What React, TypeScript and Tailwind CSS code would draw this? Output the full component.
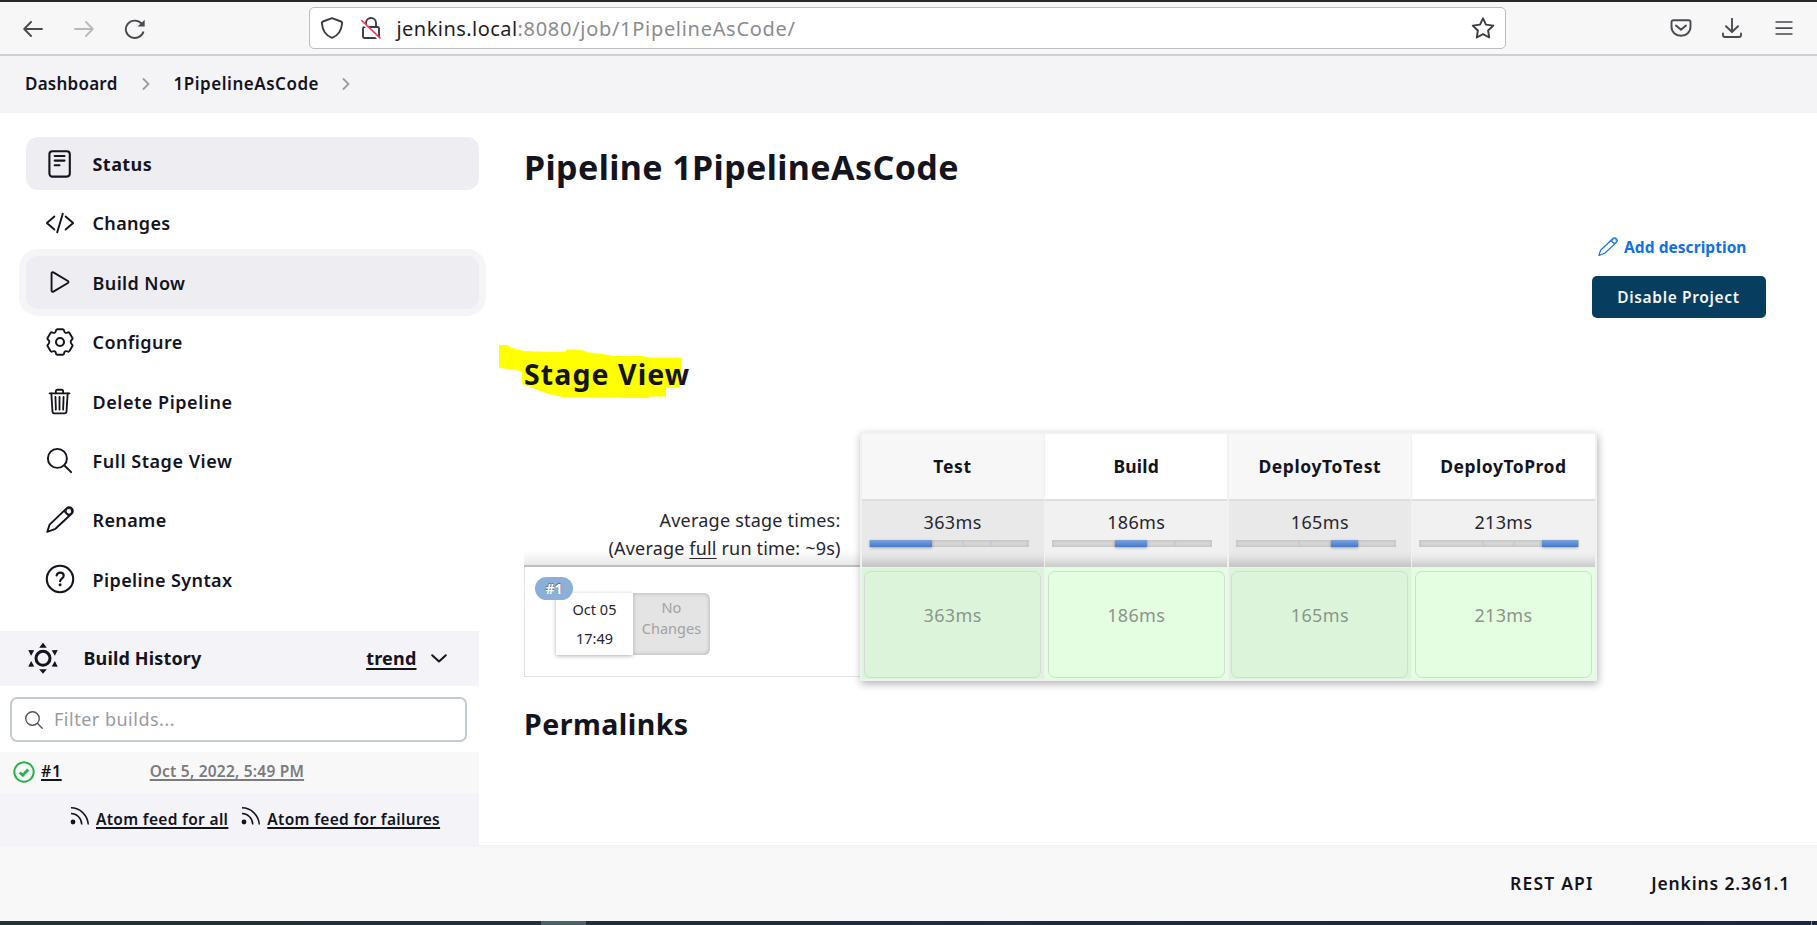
import type { ReactNode } from 'react';
import {
  IoCodeSlashOutline,
  IoPlayOutline,
  IoSearchOutline,
  IoTrashOutline,
} from 'react-icons/io5';

function ChevronRight({ className }: { className: string }) {
  return (
    <svg viewBox="0 0 8 14" className={className} fill="none" stroke="#9b9ba3" strokeWidth="1.8">
      <path d="M1 1.5 6.5 7 1 12.5" />
    </svg>
  );
}

function PencilIcon({ className, width }: { className: string; width: number }) {
  return (
    <svg viewBox="0 0 28 28" className={className} fill="none" stroke="currentColor" strokeWidth={width} strokeLinejoin="round">
      <path d="M1.3 25.8 3.6 18.6 20.6 2.4a3.6 3.6 0 0 1 5.2 5.1L9.4 22.8z" />
      <path d="m18 4.9 5.3 5.1" />
      <circle cx="22.8" cy="5.4" r="2.9" strokeWidth={width * 0.6} />
    </svg>
  );
}

function StatusIcon() {
  return (
    <svg viewBox="0 0 24 28" className="h-[28px] w-[24px]" fill="none" stroke="currentColor" strokeWidth="2.1" strokeLinecap="round">
      <rect x="1.4" y="1.2" width="20.4" height="25.4" rx="3" />
      <path d="M6.7 6h9.8M6.7 10.6h9.8M6.7 15.3h4.8" />
    </svg>
  );
}

function GearIcon() {
  return (
    <svg viewBox="0 0 28 28" className="h-[28px] w-[28px]" fill="none" stroke="currentColor" strokeWidth="1.9" strokeLinejoin="round">
      <path d="M11.3 1.2H16.700Q18 1.300 18.100 2.700 18.200 4 19.200 4.600 20.300 5.200 21.500 4.500 22.700 3.900 23.500 5L26.300 9.800Q27 11 25.800 11.800 24.700 12.700 24.700 14 24.700 15.300 25.800 16.200 27 17 26.300 18.200L23.500 23Q22.700 24.100 21.500 23.500 20.300 22.800 19.200 23.400 18.200 24 18.100 25.300 18 26.700 16.700 26.800H11.300Q10 26.700 9.900 25.300 9.800 24 8.800 23.400 7.700 22.800 6.500 23.500 5.300 24.100 4.500 23L1.700 18.200Q1 17 2.200 16.200 3.300 15.300 3.300 14 3.300 12.700 2.200 11.800 1 11 1.700 9.800L4.500 5Q5.300 3.900 6.500 4.500 7.700 5.200 8.800 4.600 9.800 4 9.900 2.700 10 1.300 11.300 1.200Z" />
      <circle cx="14" cy="14" r="4" strokeWidth="2.1" />
    </svg>
  );
}

function HelpIcon() {
  return (
    <svg viewBox="0 0 30 30" className="h-[30px] w-[30px]" fill="none" stroke="currentColor" strokeWidth="2.1" strokeLinecap="round" strokeLinejoin="round">
      <circle cx="15" cy="15" r="13.2" />
      <path d="M11.600 11.500c.5-2.200 2-2.900 3.600-2.900 2 0 3.500 1.200 3.500 3.100 0 2.900-3.600 2.900-3.600 5.600" />
      <circle cx="15.100" cy="20.800" r="1.500" fill="currentColor" stroke="none" />
    </svg>
  );
}

function RssIcon() {
  return (
    <svg viewBox="0 0 20 20" className="h-[20px] w-[20px]" fill="none" stroke="#14141f" strokeWidth="1.5">
      <circle cx="3" cy="16" r="2.4" fill="#14141f" stroke="none" />
      <path d="M1 7.5c5.500 0 10.500 4.500 10.800 11M1 1.800C10 1.800 17.500 9 18.300 18.500" />
    </svg>
  );
}

function SunIcon() {
  return (
    <svg viewBox="0 0 32 32" className="h-[32px] w-[32px]" fill="#14141f">
      <circle cx="16" cy="16.300" r="7" fill="none" stroke="#14141f" strokeWidth="3" />
      <path d="M16 .8l3.800 5h-7.600zM16 31.700l3.800-4.500h-7.600zM1.300 8l6 .3-3.200 5.400zM30.700 8l-6 .3 3.200 5.400zM1.300 24.800l6-.3-3.200-5.400zM30.700 24.800l-6-.3 3.200-5.400z" />
    </svg>
  );
}

function BrowserBar() {
  return (
    <div className="flex h-[56px] items-center border-t-2 border-b-2 border-t-[#2a262b] border-b-[#cfcfcf] bg-[#f7f7f7] text-[#4a4a50]">
      <svg viewBox="0 0 20 16" className="mt-[2px] ml-[22.500px] h-[16px] w-[20px]" fill="none" stroke="currentColor" strokeWidth="1.900" strokeLinecap="round" strokeLinejoin="round">
        <path d="M19 8H1.200M8 1 1.200 8 8 15" />
      </svg>
      <svg viewBox="0 0 20 16" className="mt-[2px] ml-[31px] h-[16px] w-[20px] text-[#b9b9bb]" fill="none" stroke="currentColor" strokeWidth="1.800" strokeLinecap="round" strokeLinejoin="round">
        <path d="M1 8h17.800M12 1l6.800 7-6.800 7" />
      </svg>
      <svg viewBox="0 0 22 20" className="mt-[2px] ml-[30px] h-[20px] w-[22px]" fill="none" stroke="currentColor" strokeWidth="1.900">
        <path d="M19.500 12.500A9 8.700 0 1 1 17.500 4.500" />
        <path d="M20.700.8v6.700h-7z" fill="currentColor" stroke="none" />
      </svg>
      <div className="ml-[163px] flex h-[42px] w-[1197px] items-center rounded-[5px] border border-[#bdbdbd] bg-white">
        <svg viewBox="0 0 22 22" className="ml-[11px] h-[22px] w-[22px]" fill="none" stroke="#3c3c42" strokeWidth="1.900" strokeLinejoin="round">
          <path d="M11 1.200 20 4.500c.8.300 1.200.8 1.100 1.700C20.600 13 17.500 18.500 11 20.800 4.500 18.500 1.400 13 .9 6.200.8 5.300 1.200 4.800 2 4.500z" />
        </svg>
        <svg viewBox="0 0 20 22" className="ml-[18px] h-[22px] w-[20px]" fill="none" stroke="#3c3c42" strokeWidth="1.900">
          <rect x="2" y="10" width="16" height="11" rx="1.500" />
          <path d="M5 10V6a5 5 0 0 1 10 0v4" />
          <path d="M.3 4.800 18.500 22.500" stroke="#fff" strokeWidth="2.600" />
          <path d="M.3 3.200 19.500 21.500" stroke="#ff3b5f" strokeWidth="1.700" />
        </svg>
        <div className="mt-[1px] ml-[16px] flex text-[20px] leading-[28px]">
          <span className="tracking-[0.450px] text-[#1f1e26]">jenkins.local</span>
          <span className="tracking-[0.700px] text-[#8b8b90]">:8080/job/1PipelineAsCode/</span>
        </div>
        <svg viewBox="0 0 24 22" className="mr-[9.500px] ml-auto h-[22px] w-[24px]" fill="none" stroke="#3c3c42" strokeWidth="1.900" strokeLinejoin="round">
          <path d="M12 1.300 15 7.600l7.300 1-5.200 4.900 1.100 7L12 17.200 5.800 20.500l1.100-7L1.700 8.600l7.300-1z" />
        </svg>
      </div>
      <svg viewBox="0 0 22 18" className="ml-[164px] h-[18px] w-[22px]" fill="none" stroke="currentColor" strokeWidth="1.900" strokeLinecap="round" strokeLinejoin="round">
        <path d="M3.500 1.200h15a2 2 0 0 1 2 2v4.300c0 5.500-4 9.300-9.500 9.300S1.500 13 1.500 7.500V3.200a2 2 0 0 1 2-2z" />
        <path d="m6 6.500 5 4.300 5-4.300" />
      </svg>
      <svg viewBox="0 0 20 20" className="ml-[30px] h-[20px] w-[20px]" fill="none" stroke="currentColor" strokeWidth="1.900" strokeLinecap="round" strokeLinejoin="round">
        <path d="M10 .8v13M4 8.200l6 5.800 6-5.800M1 15.500v1.500c0 1.200.8 2 2 2h14c1.200 0 2-.8 2-2v-1.500" />
      </svg>
      <svg viewBox="0 0 18 14" className="ml-[33px] h-[14px] w-[18px]" fill="none" stroke="currentColor" strokeWidth="1.700">
        <path d="M.5 1H17.500M.5 7.200H17.500M.5 13H17.500" />
      </svg>
    </div>
  );
}

function Task({ icon, children, className = '', text }: { icon: ReactNode; children: ReactNode; className?: string; text: string }) {
  return (
    <a className={`flex h-[53px] items-center rounded-[12px] ${className}`}>
      <span className="ml-[18px] flex w-[32px] justify-center">{icon}</span>
      <span className={`ml-[17px] pt-[1px] text-[18px] leading-[28px] ${text}`}>{children}</span>
    </a>
  );
}

function Sidebar() {
  return (
    <aside className="flex w-[479px] flex-col">
      <nav className="mt-[24.500px] ml-[25.500px] flex h-[494px] flex-col gap-[6.400px] text-[#14141f]">
        <Task icon={<StatusIcon />} className="bg-[#eeedf2]" text="font-bold tracking-[0.450px]">Status</Task>
        <Task icon={<IoCodeSlashOutline className="size-[30px]" />} text="font-semibold tracking-[0.330px]">Changes</Task>
        <Task icon={<IoPlayOutline className="size-[30px]" />} className="bg-[#eeedf2] ring-[7px] ring-[#f5f5f8]" text="font-semibold tracking-[0.390px]">Build Now</Task>
        <Task icon={<GearIcon />} text="font-semibold tracking-[0.400px]">Configure</Task>
        <Task icon={<IoTrashOutline className="size-[29px]" />} text="font-semibold tracking-[0.530px]">Delete Pipeline</Task>
        <Task icon={<IoSearchOutline className="size-[31px]" />} text="font-semibold tracking-[0.540px]">Full Stage View</Task>
        <Task icon={<PencilIcon className="size-[28px]" width={1.9} />} text="font-semibold tracking-[0.350px]">Rename</Task>
        <Task icon={<HelpIcon />} text="font-semibold tracking-[0.400px]">Pipeline Syntax</Task>
      </nav>
      <div className="flex h-[55px] items-center bg-[#f3f3f8] pb-[2px] text-[18px] leading-[28px] text-[#14141f]">
        <span className="ml-[27px]"><SunIcon /></span>
        <span className="ml-[24.500px] font-bold tracking-[0.150px]">Build History</span>
        <span className="mr-[14.500px] ml-auto font-bold tracking-[0.200px] underline decoration-[2px] underline-offset-[3px]">trend</span>
        <svg viewBox="0 0 16 9" className="mt-[2px] mr-[32px] h-[9px] w-[16px]" fill="none" stroke="#14141f" strokeWidth="2" strokeLinecap="round" strokeLinejoin="round">
          <path d="m1.200 1.200 6.800 6.300 6.800-6.300" />
        </svg>
      </div>
      <div className="mt-[11px] ml-[10px] flex h-[45px] w-[457px] items-center rounded-[7px] border-2 border-[#c3ccd1] bg-white">
        <IoSearchOutline className="ml-[11px] size-[22px] text-[#4d545d]" />
        <span className="-mt-[2px] ml-[9px] text-[18px] leading-[28px] tracking-[0.500px] text-[#9a9aa4]">Filter builds...</span>
      </div>
      <div className="mt-[10px] flex h-[41px] items-center bg-[#f8f8f8] text-[15.500px] leading-[24px] font-semibold">
        <svg viewBox="0 0 22 22" className="-mt-[1px] ml-[13px] h-[22px] w-[22px]" fill="none" stroke="#2bb14c">
          <circle cx="11" cy="11" r="9.700" strokeWidth="2" />
          <path d="m6.800 11.500 3 2.700 5.400-5.700" strokeWidth="2.800" />
        </svg>
        <span className="-mt-[4px] ml-[6px] text-[16px] tracking-[0.600px] text-[#14141f] underline decoration-[1.500px] underline-offset-[2px]">#1</span>
        <span className="-mt-[4px] ml-[88px] tracking-[0.210px] text-[#7b7b80] underline decoration-[1.500px] underline-offset-[2px]">Oct 5, 2022, 5:49 PM</span>
      </div>
      <div className="flex h-[52px] items-center bg-[#f3f3f8] text-[15.500px] leading-[24px] font-semibold text-[#14141f]">
        <span className="-mt-[7px] ml-[70px]"><RssIcon /></span>
        <span className="ml-[6px] tracking-[0.330px] underline decoration-[1.500px] underline-offset-[2px]">Atom feed for all</span>
        <span className="-mt-[7px] ml-[13px]"><RssIcon /></span>
        <span className="ml-[6px] tracking-[0.330px] underline decoration-[1.500px] underline-offset-[2px]">Atom feed for failures</span>
      </div>
    </aside>
  );
}

const segments = [63, 32, 28, 37];

const stages = [
  { name: 'Test', time: '363ms', label: 'tracking-[0.700px]', head: 'bg-[#f7f7f7]', mid: 'bg-[#e9e9e9]', cell: 'bg-[#dcf5da]' },
  { name: 'Build', time: '186ms', label: 'tracking-[0.200px]', head: 'bg-white', mid: 'bg-[#f1f1f1]', cell: 'bg-[#e3fee0]' },
  { name: 'DeployToTest', time: '165ms', label: 'tracking-[0.600px]', head: 'bg-[#f7f7f7]', mid: 'bg-[#e9e9e9]', cell: 'bg-[#dcf5da]' },
  { name: 'DeployToProd', time: '213ms', label: 'tracking-[0.500px]', head: 'bg-white', mid: 'bg-[#f1f1f1]', cell: 'bg-[#e3fee0]' },
];

function StageTable() {
  return (
    <div className="ml-[45px] flex h-[249px] w-[1073px]">
      <div className="flex w-[335.500px] flex-col">
        <div className="mt-[66px] flex h-[69px] flex-col items-end border-b-2 border-[#bdbdbd] bg-linear-to-t from-[#e9e9e9] from-0% via-white via-22% to-white pt-[9px] pr-[19px] text-[18px] leading-[27.500px] text-[#26262f]">
          <span className="tracking-[0.220px]">Average stage times:</span>
          <span className="tracking-[0.170px]">
            (Average <span className="underline underline-offset-[3px]">full</span> run time: ~9s)
          </span>
        </div>
        <div className="h-[110px] border-b border-l border-[#e2e2e2] bg-white">
          <div className="relative mt-[26px] ml-[31px] flex h-[62px] w-[154px] text-[14.500px]">
            <div className="flex w-[77px] flex-col items-center bg-white pt-[2px] leading-[29px] text-[#26262f] shadow-[0_1px_4px_rgba(0,0,0,0.300)]">
              <span>Oct 05</span>
              <span>17:49</span>
            </div>
            <div className="flex w-[77px] flex-col items-center rounded-r-[6px] bg-[#e4e4e4] pt-[4px] leading-[21px] text-[#a2a2a2] shadow-[inset_0_0_4px_rgba(0,0,0,0.250)]">
              <span>No</span>
              <span>Changes</span>
            </div>
            <span className="absolute -top-[16px] -left-[21px] flex h-[23px] w-[38px] items-center justify-center rounded-full bg-[#8bafd6] text-[14px] font-bold text-white [text-shadow:0_-1px_1px_rgba(0,0,0,0.450)]">#1</span>
          </div>
        </div>
      </div>
      <div className="grid w-[737px] grid-cols-4 gap-[1.500px] border-2 border-[#f1f1f3] bg-[#f1f1f3] shadow-[1px_3px_8px_rgba(0,0,0,0.300)]">
        {stages.map((s, i) => (
          <div key={s.name} className="flex flex-col text-[18px] text-[#26262f]">
            <div className={`flex h-[64.500px] items-center justify-center text-[17.500px] leading-[28px] font-bold text-[#14141f] ${s.head} ${s.label}`}>{s.name}</div>
            <div className={`flex h-[68.500px] flex-col items-center border-t-2 border-[#dedede] pt-[7px] shadow-[inset_0_-14px_10px_-8px_rgba(0,0,0,0.170)] ${s.mid}`}>
              <span className="leading-[28px] tracking-[0.350px]">{s.time}</span>
              <div className="mt-[4px] mr-[8px] flex h-[7px] w-[160px] border border-[#c9c9c9] bg-[#d8d8d8]">
                {segments.map((w, j) => (
                  <div
                    key={j}
                    style={{ width: w }}
                    className={j === i ? '-my-px bg-linear-to-b from-[#7ba1dd] to-[#4679cc] shadow-[0_1px_3px_rgba(0,0,0,0.300)]' : 'shadow-[inset_0_0_3px_rgba(0,0,0,0.120)]'}
                  />
                ))}
              </div>
            </div>
            <div className={`mt-px flex h-[111px] flex-col px-[2.500px] pt-[3px] pb-[1px] ${s.cell}`}>
              <div className="flex h-[107px] items-center justify-center rounded-[7px] border-[1.500px] border-[#d2dcd0] pb-[19px] leading-[28px] tracking-[0.350px] text-[#8b968a]">
                {s.time}
              </div>
            </div>
          </div>
        ))}
      </div>
    </div>
  );
}

function MainPanel() {
  return (
    <main className="flex flex-1 flex-col text-[#14141f]">
      <h1 className="mt-[32px] ml-[45px] text-[34px] leading-[44px] font-bold tracking-[0.400px]">Pipeline 1PipelineAsCode</h1>
      <div className="mt-[45.500px] mr-[51.500px] flex flex-col items-end">
        <div className="mr-[19px] flex h-[26px] items-center text-[15.500px] leading-[24px] font-bold tracking-[0.050px] text-[#1270e0]">
          <PencilIcon className="mr-[6px] size-[20px]" width={1.6} />
          Add description
        </div>
        <button className="mt-[16px] h-[42px] w-[174px] rounded-[5px] bg-[#073e60] pb-[1px] text-[15.500px] leading-[24px] font-semibold tracking-[0.650px] text-[#f2f4f6]">Disable Project</button>
      </div>
      <div className="relative mt-[35.500px] ml-[45px]">
        <svg viewBox="0 0 182 54" className="absolute -top-[8.500px] -left-[25px] h-[54px] w-[182px]" fill="#ffff00">
          <path d="M0 0h8l5 3 12 3 28 1 14-.5V4.500h13l10 3 14 1.500 10 2h28l10 1.500h30v13l-1 17h-14v9h-16v1.500h-30v-1H64l-14-3-14-5-10-4-3-1V26l-12-1.500L0 22.500z" />
        </svg>
        <h2 className="relative text-[28.500px] leading-[40px] font-bold tracking-[1.080px]">Stage View</h2>
      </div>
      <div className="mt-[38.500px]"><StageTable /></div>
      <h2 className="mt-[22.500px] ml-[45px] text-[28.500px] leading-[40px] font-bold tracking-[0.480px]">Permalinks</h2>
    </main>
  );
}

export default function App() {
  return (
    <div className="flex h-[925px] w-[1817px] flex-col overflow-hidden bg-white font-['Noto_Sans',sans-serif]">
      <BrowserBar />
      <div className="flex h-[56.500px] items-center bg-[#f4f4f7] text-[17px] leading-[26px] font-semibold text-[#14141f]">
        <span className="ml-[25px] tracking-[0.240px]">Dashboard</span>
        <ChevronRight className="ml-[24px] h-[14px] w-[8px]" />
        <span className="ml-[24px] tracking-[0.520px]">1PipelineAsCode</span>
        <ChevronRight className="ml-[23px] h-[14px] w-[8px]" />
      </div>
      <div className="flex h-[732.500px]">
        <Sidebar />
        <MainPanel />
      </div>
      <footer className="flex h-[76px] items-center border-t border-[#f0f0f4] bg-[#f8f8f8] pb-[2px] text-[17.500px] leading-[28px] font-semibold text-[#14141f]">
        <span className="ml-[1510px] tracking-[1.200px]">REST API</span>
        <span className="ml-[57.500px] tracking-[0.850px]">Jenkins 2.361.1</span>
      </footer>
      <div className="flex h-[4px] bg-linear-to-r from-[#1f343e] to-[#1b2742]">
        <div className="ml-[541px] w-[45px] bg-[#4c626c]" />
        <div className="mr-[5px] ml-auto w-px bg-[#8a93a5]" />
      </div>
    </div>
  );
}
